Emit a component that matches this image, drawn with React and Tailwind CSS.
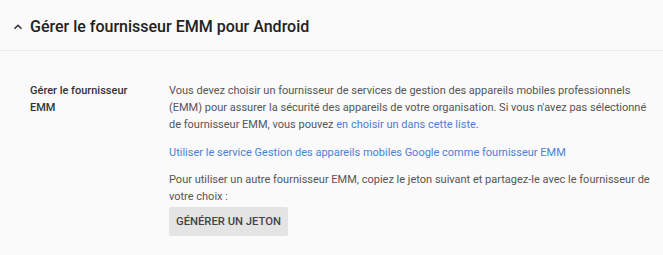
export default function App() {
  return (
    <div className="w-[663px] h-[255px] bg-[#fafafa] overflow-hidden" style={{ fontFamily: "Roboto, 'Liberation Sans', sans-serif" }}>
      {/* Header */}
      <div className="h-[51px] flex items-center pl-[13px] pt-[3px] border-b border-[#ececec]">
        <svg width="10" height="10" viewBox="0 0 10 10" className="mr-[7px]">
          <path d="M1.5 6.8 L5 3.3 L8.5 6.8" fill="none" stroke="#333" strokeWidth="1.6" />
        </svg>
        <h1 className="text-[16px] font-medium text-[#212121] leading-none">
          Gérer le fournisseur EMM pour Android
        </h1>
      </div>

      {/* Row */}
      <div className="flex pt-[31px]">
        <div className="w-[169px] pl-[30px] shrink-0 text-[11px] font-medium text-[#333] leading-[17px]">
          Gérer le fournisseur
          <br />
          EMM
        </div>
        <div className="w-[482px] text-[11px] text-[#555] leading-[17px]">
          <p>
            Vous devez choisir un fournisseur de services de gestion des appareils mobiles professionnels (EMM) pour assurer la sécurité des appareils de votre organisation. Si vous n'avez pas sélectionné de fournisseur EMM, vous pouvez{" "}
            <a className="text-[#4a7fd8]">en choisir un dans cette liste</a>.
          </p>
          <p className="mt-[11px]">
            <a className="text-[#4a7fd8]">Utiliser le service Gestion des appareils mobiles Google comme fournisseur EMM</a>
          </p>
          <p className="mt-[10px]">
            Pour utiliser un autre fournisseur EMM, copiez le jeton suivant et partagez-le avec le fournisseur de votre choix :
          </p>
          <button className="mt-[2px] h-[29px] px-[7px] bg-[#e4e4e4] text-[#444] text-[11.25px] font-medium uppercase rounded-[2px]">
            Générer un jeton
          </button>
        </div>
      </div>
    </div>
  );
}
